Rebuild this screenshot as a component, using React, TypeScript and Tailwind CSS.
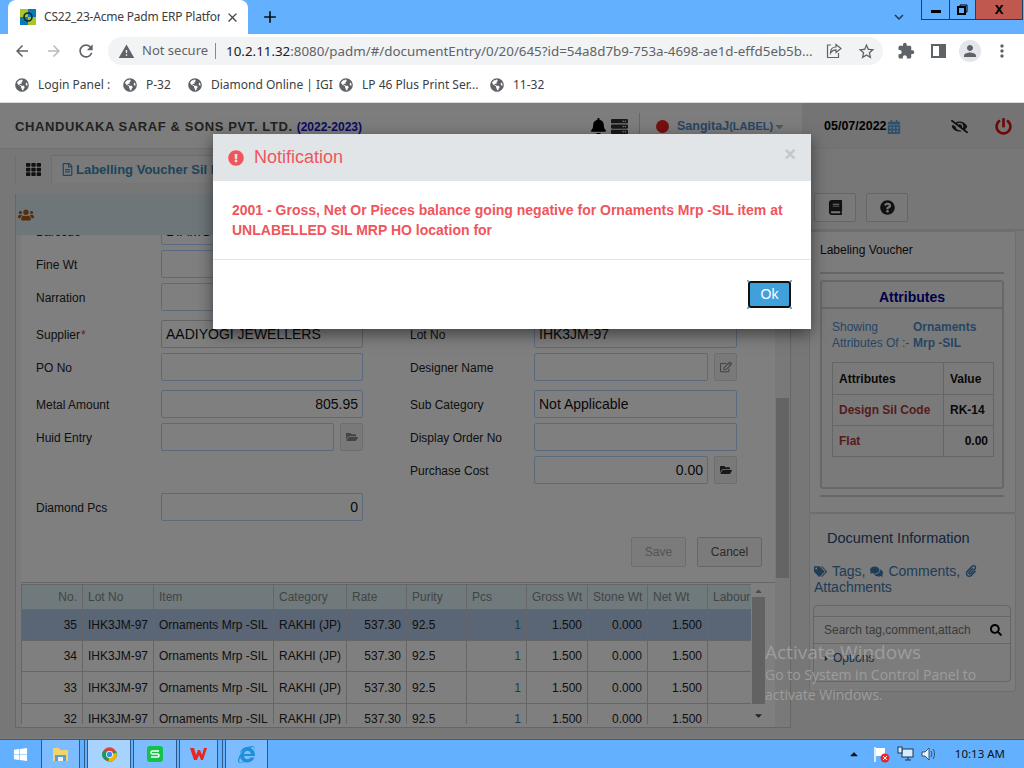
import React from 'react';
import { FaBell, FaServer, FaCalendarAlt, FaEyeSlash, FaPowerOff, FaTh, FaRegFileAlt, FaUsers, FaExclamationCircle, FaBook, FaQuestionCircle, FaTags, FaComments, FaPaperclip, FaSearch, FaFolderOpen, FaRegEdit, FaGlobeAmericas, FaWindows, FaInternetExplorer, FaCaretDown, FaCaretUp, FaCaretRight } from 'react-icons/fa';
import { MdArrowBack, MdArrowForward, MdRefresh, MdWarning, MdExtension, MdPerson, MdMoreVert, MdClose, MdAdd, MdKeyboardArrowDown, MdStarBorder } from 'react-icons/md';

const bookmarks = [
  { label: 'Login Panel :', cls: 'w-[92px]' },
  { label: 'P-32', cls: 'w-[49px]' },
  { label: 'Diamond Online | IGI', cls: 'w-[135px]' },
  { label: 'LP 46 Plus Print Ser...', cls: 'w-[135px]' },
  { label: '11-32', cls: 'w-[60px]' },
];

const columns = [
  { name: 'No.', w: 'w-[61px]', right: true },
  { name: 'Lot No', w: 'w-[71px]' },
  { name: 'Item', w: 'w-[120px]' },
  { name: 'Category', w: 'w-[73px]' },
  { name: 'Rate', w: 'w-[60px]' },
  { name: 'Purity', w: 'w-[60px]' },
  { name: 'Pcs', w: 'w-[60px]' },
  { name: 'Gross Wt', w: 'w-[61px]' },
  { name: 'Stone Wt', w: 'w-[60px]' },
  { name: 'Net Wt', w: 'w-[60px]' },
  { name: 'Labour', w: 'w-[44px]' },
];

const rows = [
  { no: '35', h: 'h-[31px] bg-[#b4cbea]' },
  { no: '34', h: 'h-[31px] bg-white' },
  { no: '33', h: 'h-[32px] bg-white' },
  { no: '32', h: 'h-[31px] bg-white' },
];

// one line of the voucher form
const Field = ({ label, value, right, required, icon, faded, labelW = 'w-[125px]', cols = 'w-[202px]' }: { label?: string; value?: string; right?: boolean; required?: boolean; icon?: React.ReactNode; faded?: boolean; labelW?: string; cols?: string }) => (
  <div className="flex items-center h-[28px]">
    <div className={`${labelW} pt-[2px] text-[12px] text-[#222]`}>
      {label}
      {required && <span className="text-[#d33] ml-[1px]">*</span>}
    </div>
    <div className={`${cols} flex gap-[6px]`}>
      <div className={`flex-1 h-[28px] rounded-[2px] border bg-white flex items-center px-[4px] text-[14px] text-[#111] ${faded ? 'border-[#ccc]' : 'border-[#b4d4ff]'} ${right ? 'justify-end' : ''}`}>
        {value}
      </div>
      {icon && (
        <div className="w-[23px] h-[28px] rounded-[2px] border border-[#ddd] bg-[#f2f2f2] flex items-center justify-center text-[12px] text-[#333]">
          {icon}
        </div>
      )}
    </div>
  </div>
);

const ChromeLogo = () => (
  <svg width="15" height="15" viewBox="0 0 48 48">
    <circle cx="24" cy="24" r="23" fill="#db4437" />
    <path d="M24 24 L4 36 A23 23 0 0 1 4 12 L14 12 Z" fill="#0f9d58" />
    <path d="M24 24 L44 12 A23 23 0 0 1 24 47 L4 36 Z" fill="#0f9d58" />
    <path d="M24 24 L46 18 A23 23 0 0 1 20 47 Z" fill="#f4b400" />
    <circle cx="24" cy="24" r="11" fill="#fff" />
    <circle cx="24" cy="24" r="8.5" fill="#4285f4" />
  </svg>
);

const App: React.FC = () => {
  return (
    <div className="relative w-[1024px] h-[768px] overflow-hidden flex flex-col bg-white font-['Liberation_Sans',Arial,sans-serif]">
      {/* Chrome tab strip */}
      <div className="h-[34px] bg-[#63b0ff] flex shrink-0 relative font-['Noto_Sans',sans-serif]">
        <div className="ml-[8px] w-[240px] h-[34px] bg-white rounded-t-[8px] flex items-center pl-[12px] pr-[8px]">
          <svg width="16" height="16" viewBox="0 0 16 16" className="shrink-0">
            <rect width="16" height="16" fill="#0b79b8" />
            <rect width="8" height="8" fill="#a8c628" />
            <rect x="8" y="8" width="8" height="8" fill="#a8c628" />
            <circle cx="8" cy="8" r="4" fill="none" stroke="#123" strokeWidth="1.6" />
          </svg>
          <div className="ml-[8px] w-[176px] overflow-hidden whitespace-nowrap text-[12px] tracking-[-0.2px] text-[#3c4043]">CS22_23-Acme Padm ERP Platform</div>
          <MdClose className="ml-[5px] text-[15px] text-[#444]" />
        </div>
        <MdAdd className="ml-[12px] mt-[7px] text-[20px] text-[#111]" />
        <MdKeyboardArrowDown className="absolute left-[890px] top-[8px] text-[18px] text-[#1f3a55]" />
        <div className="absolute left-[921px] top-0 h-[20px] w-[102px] flex border border-t-0 border-[#1f3f60]">
          <div className="w-[28px] flex items-center justify-center border-r border-[#1f3f60]">
            <div className="w-[10px] h-[3px] mt-[3px] bg-black" />
          </div>
          <div className="w-[26px] flex items-center justify-center border-r border-[#1f3f60]">
            <svg width="11" height="11" viewBox="0 0 11 11" fill="none" stroke="#000">
              <path d="M3 2.5V1h7v7H8.5" />
              <rect x="1" y="3" width="7" height="7" strokeWidth="2" />
            </svg>
          </div>
          <div className="flex-1 bg-[#c0584f] flex items-center justify-center text-[13px] font-bold text-black">X</div>
        </div>
      </div>

      {/* Chrome toolbar */}
      <div className="h-[34px] bg-white flex items-center shrink-0 text-[#5f6368] font-['Noto_Sans',sans-serif]">
        <MdArrowBack className="ml-[13px] text-[18px]" />
        <MdArrowForward className="ml-[14px] text-[18px] text-[#bbb]" />
        <MdRefresh className="ml-[13px] text-[20px]" />
        <div className="ml-[12px] w-[775px] h-[28px] rounded-full bg-[#f1f3f4] flex items-center">
          <MdWarning className="ml-[10px] text-[17px]" />
          <span className="ml-[7px] text-[13px]">Not secure</span>
          <div className="ml-[7px] w-px h-[16px] bg-[#888]" />
          <div className="ml-[10px] w-[588px] overflow-hidden whitespace-nowrap text-[13.35px]">
            <span className="text-[#202124]">10.2.11.32</span>:8080/padm/#/documentEntry/0/20/645?id=54a8d7b9-753a-4698-ae1d-effd5eb5b...
          </div>
          <svg width="16" height="16" viewBox="0 0 16 16" fill="none" stroke="currentColor" strokeWidth="1.2" className="ml-[12px]">
            <path d="M5 2H1.5v12.5h11V10" />
            <path d="M15 5.5L10 1.5v2.5C6.5 4 4.5 6.5 4.5 10c1.5-2.5 3-3.2 5.5-3.2v2.6z" />
          </svg>
          <MdStarBorder className="ml-[15px] text-[19px]" />
        </div>
        <MdExtension className="ml-[14px] text-[18px]" />
        <div className="ml-[16px] w-[15px] h-[14px] border-2 border-[#5f6368] flex justify-end">
          <div className="w-[5px] bg-[#5f6368]" />
        </div>
        <div className="ml-[13px] w-[22px] h-[22px] rounded-full bg-[#e3e6ea] flex items-center justify-center">
          <MdPerson className="text-[18px]" />
        </div>
        <MdMoreVert className="ml-[11px] text-[20px]" />
      </div>

      {/* Bookmarks bar */}
      <div className="h-[35px] bg-white border-b border-[#dcdcdc] flex items-center pl-[15px] shrink-0 font-['Noto_Sans',sans-serif]">
        {bookmarks.map((b) => (
          <div key={b.label} className={`${b.cls} flex items-center gap-[9px] text-[12px] text-[#3c4043] whitespace-nowrap shrink-0 mr-[16px]`}>
            <FaGlobeAmericas className="text-[14px] text-[#5f6368] shrink-0" />
            {b.label}
          </div>
        ))}
      </div>

      {/* Application page, dimmed by the dialog backdrop */}
      <div className="relative h-[636px] shrink-0 overflow-hidden bg-[#fafafa]">
        {/* App header */}
        <div className="h-[46px] flex border-b border-[#e0e0e0]">
          <div className="w-[802px] flex items-center pl-[15px] pt-[2px] shrink-0">
            <span className="text-[13px] font-bold tracking-[0.6px] text-[#444]">CHANDUKAKA SARAF &amp; SONS PVT. LTD.</span>
            <span className="ml-[4px] text-[12px] font-bold text-[#1414c8]">(2022-2023)</span>
            <FaBell className="ml-[228px] text-[17px] text-black" />
            <FaServer className="ml-[4px] text-[17px] text-[#333]" />
            <div className="ml-[11px] w-px h-[28px] bg-[#ccc]" />
            <div className="ml-[16px] w-[13px] h-[13px] rounded-full bg-[#e82020]" />
            <span className="ml-[8px] text-[12.5px] font-bold text-[#4f8cc8]">SangitaJ</span>
            <span className="text-[11px] font-bold text-[#4f8cc8]">(LABEL)</span>
            <FaCaretDown className="text-[13px] text-[#aaa]" />
          </div>
          <div className="flex-1 bg-[#e8e8e8] flex items-center pl-[22px] pt-[2px]">
            <span className="text-[12.5px] font-bold text-black">05/07/2022</span>
            <FaCalendarAlt className="text-[14px] text-[#5aa0dc]" />
            <FaEyeSlash className="ml-[50px] text-[17px] text-[#222]" />
            <FaPowerOff className="ml-[27px] text-[17px] text-[#e01010]" />
          </div>
        </div>

        <div className="flex h-[589px]">
          {/* Left: voucher */}
          <div className="w-[802px] pl-[15px] bg-[#eee] shrink-0">
            <div className="h-[34px] flex items-end">
              <div className="w-[36px] h-[28px] flex items-center pl-[10px] text-[15px] text-[#222] border-l border-[#ddd]">
                <FaTh />
              </div>
              <div className="w-[400px] h-[28px] flex items-center pl-[9px] border border-b-0 border-[#ddd] bg-[#f5f5f5] text-[13px] font-bold text-[#3c88b4] overflow-hidden whitespace-nowrap">
                <FaRegFileAlt className="text-[13px] mr-[2px] text-[#4a8ab8]" />
                Labelling Voucher Sil Mrp
              </div>
            </div>

            <div className="mt-[11px] w-[776px] h-[534px] border-x border-b border-[#ccc] bg-white flex flex-col">
              <div className="h-[41px] shrink-0 bg-[#dcecf2] flex items-center pl-[2px] text-[16px] text-[#b05a10]">
                <FaUsers />
              </div>
              <div className="flex-1 flex overflow-hidden">
                <div className="w-[759px] shrink-0 border-l-[5px] border-[#f4f4f4] overflow-hidden">
                  {/* Form; first row runs under the title bar */}
                  <div className="-mt-[18px] pl-[15px] flex gap-[47px] h-[320px]">
                    <div className="w-[327px] shrink-0 flex flex-col">
                      <Field label="Barcode" value="DIAMOND" />
                      <div className="mt-[5px]"><Field label="Fine Wt" /></div>
                      <div className="mt-[5px]"><Field label="Narration" /></div>
                      <div className="mt-[9px]"><Field label="Supplier" required value="AADIYOGI JEWELLERS" faded /></div>
                      <div className="mt-[5px]"><Field label="PO No" /></div>
                      <div className="mt-[9px]"><Field label="Metal Amount" value="805.95" right /></div>
                      <div className="mt-[5px]"><Field label="Huid Entry" icon={<FaFolderOpen className="text-[#888]" />} /></div>
                      <div className="mt-[42px]"><Field label="Diamond Pcs" value="0" right /></div>
                    </div>
                    <div className="w-[327px] shrink-0 flex flex-col">
                      <div className="h-[94px]" />
                      <div className="mt-[9px]"><Field label="Lot No" value="IHK3JM-97" labelW="w-[124px]" cols="w-[203px]" /></div>
                      <div className="mt-[5px]"><Field label="Designer Name" labelW="w-[124px]" cols="w-[203px]" icon={<FaRegEdit className="text-[#888]" />} /></div>
                      <div className="mt-[9px]"><Field label="Sub Category" value="Not Applicable" labelW="w-[124px]" cols="w-[203px]" /></div>
                      <div className="mt-[5px]"><Field label="Display Order No" labelW="w-[124px]" cols="w-[203px]" /></div>
                      <div className="mt-[5px]"><Field label="Purchase Cost" value="0.00" right labelW="w-[124px]" cols="w-[203px]" icon={<FaFolderOpen />} /></div>
                    </div>
                  </div>

                  <div className="flex justify-end gap-[11px] pr-[13px] h-[31px]">
                    <div className="w-[55px] h-[30px] rounded-[2px] border border-[#ddd] bg-[#f6f6f6] flex items-center justify-center text-[12px] text-[#aaa]">Save</div>
                    <div className="w-[65px] h-[30px] rounded-[2px] border border-[#ccc] bg-[#f6f6f6] flex items-center justify-center text-[12px] text-[#555]">Cancel</div>
                  </div>

                  {/* Grid of voucher lines */}
                  <div className="mt-[14px] border-t border-[#ccc] pt-[1px] flex h-[142px]">
                    <div className="w-[730px] shrink-0 overflow-hidden">
                      <table className="table-fixed border-collapse w-[730px]">
                        <colgroup>
                          {columns.map((c) => <col key={c.name} className={c.w} />)}
                        </colgroup>
                        <thead>
                          <tr className="h-[25px] bg-[#e0f4f8]">
                            {columns.map((c) => (
                              <th key={c.name} className={`border border-[#ccc] px-[5px] text-[12px] font-normal text-[#888] overflow-hidden whitespace-nowrap ${c.right ? 'text-right' : 'text-left'}`}>{c.name}</th>
                            ))}
                          </tr>
                        </thead>
                        <tbody>
                          {rows.map((r) => (
                            <tr key={r.no} className={`${r.h} text-[12px] text-[#222]`}>
                              <td className="border border-[#ccc] px-[5px] text-right">{r.no}</td>
                              <td className="border border-[#ccc] px-[5px] whitespace-nowrap">IHK3JM-97</td>
                              <td className="border border-[#ccc] px-[5px] whitespace-nowrap">Ornaments Mrp -SIL</td>
                              <td className="border border-[#ccc] px-[5px] whitespace-nowrap">RAKHI (JP)</td>
                              <td className="border border-[#ccc] px-[5px] text-right">537.30</td>
                              <td className="border border-[#ccc] px-[5px]">92.5</td>
                              <td className="border border-[#ccc] px-[5px] text-right text-[#2f7a90]">1</td>
                              <td className="border border-[#ccc] px-[5px] text-right">1.500</td>
                              <td className="border border-[#ccc] px-[5px] text-right">0.000</td>
                              <td className="border border-[#ccc] px-[5px] text-right">1.500</td>
                              <td className="border border-[#ccc] px-[5px]"></td>
                            </tr>
                          ))}
                        </tbody>
                      </table>
                    </div>
                    <div className="w-[15px] shrink-0 flex flex-col items-center text-[11px] text-[#444]">
                      <FaCaretUp className="text-[#999] h-[10px] mt-[2px]" />
                      <div className="w-[13px] h-[107px] mt-[1px] bg-[#c4c4c4]" />
                      <FaCaretDown className="mt-[6px]" />
                    </div>
                  </div>
                </div>
                {/* Outer scrollbar */}
                <div className="w-[16px] bg-[#f2f2f2] pl-[1px] pt-[163px] shrink-0">
                  <div className="w-[13px] h-[180px] bg-[#c8c8c8]" />
                </div>
              </div>
            </div>
          </div>

          {/* Right: side panels */}
          <div className="flex-1 bg-[#eee] flex flex-col">
            <div className="h-[82px] pt-[44px] pl-[12px] flex gap-[10px] shrink-0 border-b-[2px] border-[#ddd]">
              <div className="w-[42px] h-[29px] rounded-[2px] border border-[#ccc] bg-[#f2f2f2] flex items-center justify-center text-[15px] text-[#222]"><FaBook /></div>
              <div className="w-[42px] h-[29px] rounded-[2px] border border-[#ccc] bg-[#f2f2f2] flex items-center justify-center text-[15px] text-[#222]"><FaQuestionCircle /></div>
            </div>
            <div className="ml-[7px] w-[207px] h-[282px] shrink-0 rounded-t-[3px] border border-[#ddd] bg-[#f8f8f8] pl-[10px] pr-[11px]">
              <div className="h-[42px] flex items-center text-[12px] text-[#111] border-b-2 border-[#ccc] pb-[5px]">Labeling Voucher</div>
              <div className="mt-[6px] h-[209px] rounded-[3px] border-2 border-[#d0d0d0] bg-[#f4f4f4]">
                <div className="h-[27px] pt-[5px] border-b-2 border-[#ccc] flex items-center justify-center text-[14px] font-bold text-[#000090]">Attributes</div>
                <div className="mt-[10px] pl-[10px] text-[12px] leading-[16px] text-[#4f8cc8]">
                  <div className="flex"><span className="w-[81px]">Showing</span><span className="font-bold">Ornaments</span></div>
                  <div className="flex"><span className="w-[81px] whitespace-nowrap">Attributes Of :-</span><span className="font-bold">Mrp -SIL</span></div>
                </div>
                <table className="ml-[10px] mt-[11px] w-[162px] table-fixed border-collapse text-[12px] font-bold">
                  <colgroup><col className="w-[111px]" /><col /></colgroup>
                  <tbody>
                    <tr className="h-[32px] text-[#111]">
                      <td className="border border-[#ccc] px-[6px]">Attributes</td>
                      <td className="border border-[#ccc] px-[6px]">Value</td>
                    </tr>
                    <tr className="h-[31px]">
                      <td className="border border-[#ccc] px-[6px] text-[#b03838] whitespace-nowrap">Design Sil Code</td>
                      <td className="border border-[#ccc] px-[6px] text-[#111]">RK-14</td>
                    </tr>
                    <tr className="h-[31px]">
                      <td className="border border-[#ccc] px-[6px] text-[#b03838]">Flat</td>
                      <td className="border border-[#ccc] px-[5px] text-right text-[#111]">0.00</td>
                    </tr>
                  </tbody>
                </table>
              </div>
              <div className="mt-[6px] border-b-2 border-[#ccc]" />
            </div>

            <div className="ml-[7px] w-[207px] h-[179px] rounded-[3px] border border-[#ddd] bg-[#f8f8f8]">
              <div className="pl-[17px] pt-[15px] text-[14.5px] leading-[18px] text-[#2a4a7a]">Document Information</div>
              <div className="pl-[4px] mt-[16px] text-[14px] leading-[16px] text-[#3f7ab0]">
                <div className="flex items-center gap-[5px]">
                  <FaTags className="text-[13px]" /> Tags,
                  <FaComments className="text-[13px]" /> Comments,
                  <FaPaperclip className="text-[12px]" />
                </div>
                <div>Attachments</div>
              </div>
              <div className="ml-[3px] mt-[10px] w-[198px] h-[77px] rounded-[4px] border border-[#ccc]">
                <div className="h-[11px] border-b border-[#ccc]" />
                <div className="h-[27px] border-b border-[#ccc] bg-[#fafafa] flex items-center pl-[10px] pr-[8px] text-[12px] text-[#777]">
                  <span className="w-[147px] overflow-hidden whitespace-nowrap">Search tag,comment,attachment</span>
                  <FaSearch className="ml-auto text-[12px] text-black" />
                </div>
                <div className="pl-[8px] pt-[5px] flex items-center text-[12px] text-[#2a5a8a]">
                  <FaCaretRight className="text-[9px] mr-[2px]" />Options
                </div>
              </div>
            </div>
          </div>
        </div>

        {/* Backdrop */}
        <div className="absolute inset-0 bg-black/50" />

        {/* Activate Windows watermark */}
        <div className="absolute left-[765px] top-[537px] text-[#9c9c9c] font-['Open_Sans',sans-serif] whitespace-nowrap">
          <div className="text-[19px] leading-[24px]">Activate Windows</div>
          <div className="text-[14px] leading-[20px] mt-[1px]">Go to System in Control Panel to</div>
          <div className="text-[14px] leading-[20px]">activate Windows.</div>
        </div>

        {/* Notification dialog */}
        <div className="absolute left-[213px] top-[31px] w-[598px] h-[195px] bg-white shadow-[0_5px_15px_rgba(0,0,0,0.5)]">
          <div className="h-[47px] bg-[#e1e5e8] flex items-center pl-[15px] pr-[15px]">
            <FaExclamationCircle className="text-[16px] text-[#f0555c]" />
            <span className="ml-[10px] text-[18px] text-[#f0555c]">Notification</span>
            <span className="ml-auto text-[20px] font-bold text-[#c4c7c9] -mt-[8px]">×</span>
          </div>
          <div className="h-[79px] border-b border-[#e5e5e5] pl-[19px] pr-[20px] pt-[19px] text-[14px] leading-[20px] font-bold text-[#f0555c]">
            2001 - Gross, Net Or Pieces balance going negative for Ornaments Mrp -SIL item at UNLABELLED SIL MRP HO location for
          </div>
          <div className="flex justify-end pt-[21px] pr-[20px]">
            <div className="relative w-[43px] h-[27px] rounded-[3px] border-2 border-[#111] bg-[#3fa0dc] flex items-center justify-center text-[14px] text-white">
              Ok
              <span className="absolute -left-[3px] -top-[3px] w-[2px] h-[2px] bg-[#6ab4e4]" />
              <span className="absolute -right-[3px] -top-[3px] w-[2px] h-[2px] bg-[#6ab4e4]" />
              <span className="absolute -left-[3px] -bottom-[3px] w-[2px] h-[2px] bg-[#6ab4e4]" />
              <span className="absolute -right-[3px] -bottom-[3px] w-[2px] h-[2px] bg-[#6ab4e4]" />
            </div>
          </div>
        </div>
      </div>

      {/* Windows taskbar */}
      <div className="h-[29px] shrink-0 bg-[#63b0ff] border-t border-[#40586f] flex items-stretch">
        <div className="w-[41px] flex items-center justify-center text-[15px] text-white"><FaWindows /></div>
        <div className="w-[39px] border-x border-[#2b5a88] bg-[#7dbdff] flex items-center justify-center">
          <svg width="17" height="16" viewBox="0 0 17 16">
            <path d="M1 2h6l1 2h8v11H1z" fill="#f3d36b" />
            <path d="M3 9h11v6H3z" fill="#5aa0d8" />
            <path d="M6 11h5v4H6z" fill="#eaf3fb" />
          </svg>
        </div>
        <div className="w-[5px] mr-[2px] border-r border-[#2b5a88]" />
        <div className="w-[44px] border-x border-[#2b5a88] bg-[#a9d3ff] flex items-center justify-center"><ChromeLogo /></div>
        <div className="ml-[2px] w-[44px] border-x border-[#2b5a88] bg-[#7dbdff] flex items-center justify-center">
          <svg width="16" height="16" viewBox="0 0 16 16">
            <rect width="16" height="16" rx="3" fill="#12c24a" />
            <path d="M12 5H5.5a1.5 1.5 0 0 0 0 3h5a1.5 1.5 0 0 1 0 3H4" fill="none" stroke="#fff" strokeWidth="1.6" />
          </svg>
        </div>
        <div className="ml-[2px] w-[39px] border-x border-[#2b5a88] bg-[#7dbdff] flex items-center justify-center">
          <svg width="17" height="14" viewBox="0 0 17 14">
            <path d="M0 1h4l2 7 2-5h2l2 5 2-7h3l-4 12h-2L9 8l-2 5H4z" fill="#e8261c" />
          </svg>
        </div>
        <div className="w-[5px] mr-[2px] border-r border-[#2b5a88]" />
        <div className="w-[43px] border-x border-[#2b5a88] bg-[#7dbdff] flex items-center justify-center text-[17px] text-[#1e8fd8]"><FaInternetExplorer /></div>
        <div className="flex-1 flex items-center justify-end pr-[19px]">
          <FaCaretUp className="text-[12px] text-[#111]" />
          <svg width="18" height="17" viewBox="0 0 18 17" className="ml-[13px]">
            <path d="M2 1v15" stroke="#fff" strokeWidth="1.5" />
            <path d="M3 2h9v8H3z" fill="#fff" />
            <circle cx="12" cy="12" r="4.5" fill="#e8262c" />
            <path d="M10 10l4 4M14 10l-4 4" stroke="#fff" />
          </svg>
          <svg width="17" height="16" viewBox="0 0 17 16" className="ml-[6px]" fill="#d9ecff" stroke="#1b3650">
            <rect x="5" y="3" width="11" height="8" />
            <rect x="1" y="1" width="4" height="6" />
            <path d="M8 14h6M11 11v3" />
          </svg>
          <svg width="16" height="16" viewBox="0 0 16 16" className="ml-[7px]" fill="#e8f3ff" stroke="#1b3650" strokeWidth="0.8">
            <path d="M1 6h3l4-4v12l-4-4H1z" />
            <path d="M10 5c1 2 1 4 0 6M12 3c2 3 2 7 0 10" fill="none" />
          </svg>
          <span className="ml-[18px] text-[11.5px] text-[#111] font-['Noto_Sans',sans-serif]">10:13 AM</span>
        </div>
      </div>
    </div>
  );
};

export default App;
